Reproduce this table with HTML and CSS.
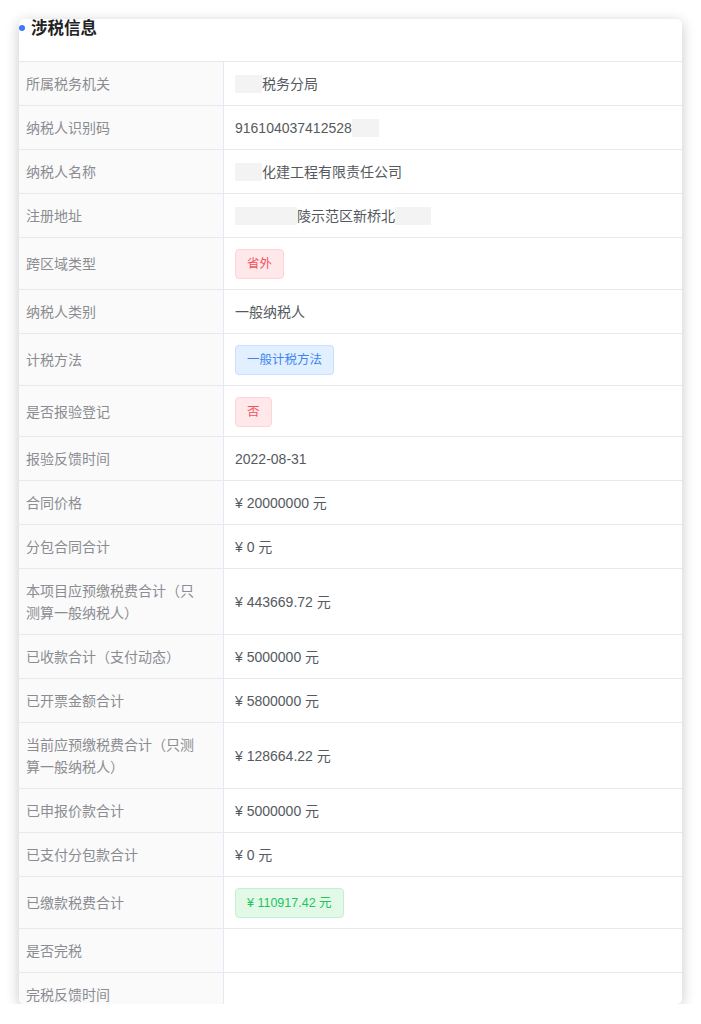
FILE: index.html
```html
<!DOCTYPE html>
<html lang="zh-CN">
<head>
  <meta charset="UTF-8" />
  <meta name="viewport" content="width=device-width, initial-scale=1.0"/>
  <title>涉税信息</title>
  <link rel="stylesheet" href="styles.css">
</head>
<body>

<div class="card">
  <div class="card-header">
    <span class="dot"></span>
    <h3>涉税信息</h3>
  </div>

  <div class="desc">
    <div class="label">所属税务机关</div>
    <div class="value"><span class="mask m1"></span>税务分局</div>

    <div class="label">纳税人识别码</div>
    <div class="value">916104037412528<span class="mask m1"></span></div>

    <div class="label">纳税人名称</div>
    <div class="value"><span class="mask m1"></span>化建工程有限责任公司</div>

    <div class="label">注册地址</div>
    <div class="value"><span class="mask m2"></span>陵示范区新桥北<span class="mask m3"></span></div>

    <div class="label">跨区域类型</div>
    <div class="value"><span class="tag tag-red">省外</span></div>

    <div class="label">纳税人类别</div>
    <div class="value">一般纳税人</div>

    <div class="label">计税方法</div>
    <div class="value"><span class="tag tag-blue">一般计税方法</span></div>

    <div class="label">是否报验登记</div>
    <div class="value tight"><span class="tag tag-red">否</span></div>

    <div class="label">报验反馈时间</div>
    <div class="value">2022-08-31</div>

    <div class="label">合同价格</div>
    <div class="value">¥ 20000000 元</div>

    <div class="label">分包合同合计</div>
    <div class="value">¥ 0 元</div>

    <div class="label">本项目应预缴税费合计（只测算一般纳税人）</div>
    <div class="value">¥ 443669.72 元</div>

    <div class="label">已收款合计（支付动态）</div>
    <div class="value">¥ 5000000 元</div>

    <div class="label">已开票金额合计</div>
    <div class="value">¥ 5800000 元</div>

    <div class="label">当前应预缴税费合计（只测算一般纳税人）</div>
    <div class="value">¥ 128664.22 元</div>

    <div class="label">已申报价款合计</div>
    <div class="value">¥ 5000000 元</div>

    <div class="label">已支付分包款合计</div>
    <div class="value">¥ 0 元</div>

    <div class="label">已缴款税费合计</div>
    <div class="value"><span class="tag tag-green">¥ 110917.42 元</span></div>

    <div class="label">是否完税</div>
    <div class="value"></div>

    <div class="label">完税反馈时间</div>
    <div class="value"></div>
  </div>
</div>

</body>
</html>
```

FILE: styles.css
```css
body {
  margin: 0;
  background: #ffffff;
  font-family: "Liberation Sans", "Noto Sans CJK SC", sans-serif;
  font-size: 14px;
  color: #606266;
}

.card {
  margin: 19px 0 0 19px;
  width: 663px;
  height: 985px;
  overflow: hidden;
  background: #fff;
  border-radius: 5px;
  box-shadow: 0 3px 14px rgba(0,0,0,0.22);
}

.card-header {
  display: flex;
  align-items: flex-start;
  gap: 6px;
  height: 42px;
}

.dot {
  width: 6px;
  height: 6px;
  border-radius: 50%;
  background: #3c7bf6;
  margin-top: 6px;
}

.card-header h3 {
  margin: 0;
  font-size: 16.5px;
  line-height: 18px;
  font-weight: bold;
  color: #222;
}

.desc {
  display: grid;
  grid-template-columns: 205px 1fr;
  border-top: 1px solid #e6e9f2;
}

.label,
.value {
  display: flex;
  align-items: center;
  min-height: 22px;
  line-height: 22px;
  padding: 11px 0 10px;
  border-bottom: 1px solid #e6e9f2;
}

.label {
  background: #fafafa;
  color: #8a8c91;
  padding-left: 7px;
  padding-right: 20px;
  border-right: 1px solid #e6e9f2;
}

.value {
  padding-left: 11px;
  padding-right: 10px;
  color: #555a60;
}

.value.tight {
  padding-bottom: 9px;
}

.mask {
  display: inline-block;
  height: 18px;
  background: #f3f3f4;
}

.m1 { width: 27px; }
.m2 { width: 62px; }
.m3 { width: 36px; }

.tag {
  display: inline-block;
  box-sizing: border-box;
  height: 30px;
  line-height: 28px;
  padding: 0 11px;
  font-size: 12.5px;
  border-radius: 4px;
  border: 1px solid;
}

.tag-red {
  background: #fee8ea;
  border-color: #fdd5d8;
  color: #f3535f;
}

.tag-blue {
  background: #e1efff;
  border-color: #c6e0fd;
  color: #3b86f0;
}

.tag-green {
  background: #e2f9e8;
  border-color: #c4efd1;
  color: #23c45e;
}
```
